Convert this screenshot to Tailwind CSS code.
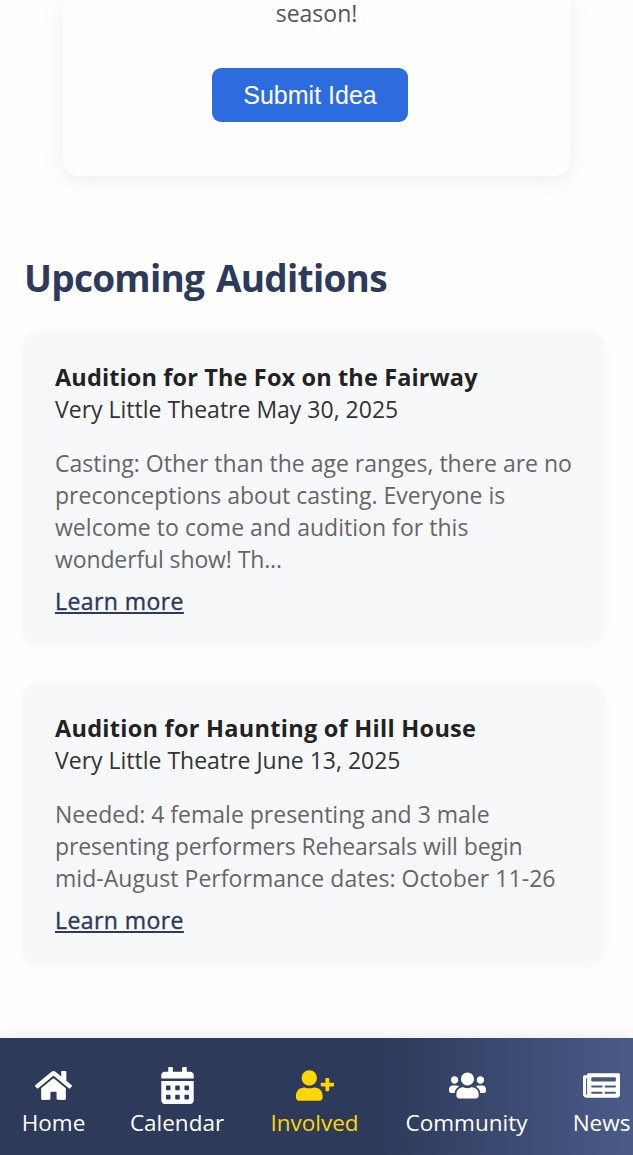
<!DOCTYPE html>
<html lang="en">
<head>
<meta charset="utf-8">
<title>Get Involved</title>
<script src="https://cdn.jsdelivr.net/npm/@tailwindcss/browser@4"></script>
</head>
<body class="bg-[#fefefe] h-[1155px] overflow-hidden flex flex-col font-['Open_Sans','Noto_Sans',sans-serif] text-[23px] leading-8 text-[#333]">
<section class="mx-[63px] h-[176px] shrink-0 w-[507px] rounded-b-2xl bg-[#fefefe] shadow-[0_4px_24px_rgba(0,0,0,0.07)] flex flex-col items-center">
  <p class="h-[29px] leading-[26px] text-[#555]">season!</p>
  <button class="mt-[39px] mr-[13px] w-[196px] h-[54px] rounded-[9px] bg-[#2d6cdf] text-white text-[25px] font-['Liberation_Sans',sans-serif]">Submit Idea</button>
</section>
<main class="pl-[23px] pr-[29px] pt-[77px] flex-1 whitespace-nowrap">
  <h2 class="pl-px h-[50px] leading-[50px] text-[37px] tracking-[-0.75px] [word-spacing:3px] font-bold text-[#2d3a5a]">Upcoming Auditions</h2>
  <article class="mt-[28px] h-[313px] rounded-2xl bg-[#f7f8fa] pl-8 pt-[30px] shadow-[0_2px_8px_rgba(0,0,0,0.04)]">
    <h3 class="font-bold text-[#222] text-[23.5px] tracking-[0.13px]">Audition for The Fox on the Fairway</h3>
    <p>Very Little Theatre May 30, 2025</p>
    <p class="mt-[22px] text-[#666]">Casting: Other than the age ranges, there are no<br>preconceptions about casting. Everyone is<br><span class="tracking-[0.03px]">welcome to come and audition for this</span><br><span class="tracking-[-0.12px]">wonderful show! Th...</span></p>
    <a class="mt-[10px] block tracking-[0.42px] [-webkit-text-stroke:0.4px_#2d3a5a] text-[#2d3a5a] underline decoration-2 underline-offset-2">Learn more</a>
  </article>
  <article class="mt-[38px] h-[282px] rounded-2xl bg-[#f7f8fa] pl-8 pt-[30px] shadow-[0_2px_8px_rgba(0,0,0,0.04)]">
    <h3 class="font-bold text-[#222] text-[23.5px] tracking-[0.27px]">Audition for Haunting of Hill House</h3>
    <p>Very Little Theatre June 13, 2025</p>
    <p class="mt-[22px] text-[#666]">Needed: 4 female presenting and 3 male<br><span class="tracking-[-0.11px]">presenting performers Rehearsals will begin</span><br><span class="tracking-[0.05px]">mid-August Performance dates: October 11-26</span></p>
    <a class="mt-[10px] block tracking-[0.42px] [-webkit-text-stroke:0.4px_#2d3a5a] text-[#2d3a5a] underline decoration-2 underline-offset-2">Learn more</a>
  </article>
</main>
<nav class="h-[117px] shrink-0 pl-[22px] pt-[29px] flex gap-[45px] whitespace-nowrap text-[22.5px] leading-8 text-white bg-linear-to-r from-[#2d3a5a] from-60% to-[#4a5b88] shadow-[0_-2px_16px_rgba(0,0,0,0.08)]">
  <a class="w-[63px] shrink-0 flex flex-col items-center gap-[3px]">
    <svg class="h-[37px] w-[37px] shrink-0" viewBox="0 0 576 512" fill="currentColor"><path d="M280.37 148.26L96 300.11V464a16 16 0 0 0 16 16l112.06-.29a16 16 0 0 0 15.92-16V368a16 16 0 0 1 16-16h64a16 16 0 0 1 16 16v95.64a16 16 0 0 0 16 16.05L464 480a16 16 0 0 0 16-16V300L295.67 148.26a12.19 12.19 0 0 0-15.3 0zM571.6 251.47L488 182.56V44.05a12 12 0 0 0-12-12h-56a12 12 0 0 0-12 12v72.61L318.47 43a48 48 0 0 0-61 0L4.34 251.47a12 12 0 0 0-1.6 16.9l25.5 31A12 12 0 0 0 45.15 301l235.22-193.74a12.19 12.19 0 0 1 15.3 0L530.9 301a12 12 0 0 0 16.9-1.6l25.5-31a12 12 0 0 0-1.7-16.93z"/></svg>
    <span>Home</span>
  </a>
  <a class="w-[94px] shrink-0 flex flex-col items-center gap-[3px]">
    <svg class="h-[37px] w-[33px] shrink-0" viewBox="0 0 448 512" fill="currentColor" fill-rule="evenodd"><path d="M400 64h-48V12c0-6.600-5.400-12-12-12h-40c-6.600 0-12 5.400-12 12v52H160V12c0-6.600-5.400-12-12-12h-40c-6.600 0-12 5.400-12 12v52H48C21.500 64 0 85.500 0 112v48h448v-48c0-26.500-21.500-48-48-48zM0 192h448v272c0 26.500-21.500 48-48 48H48c-26.500 0-48-21.500-48-48zM76 256h40q12 0 12 12v40q0 12-12 12H76q-12 0-12-12v-40q0-12 12-12zm128 0h40q12 0 12 12v40q0 12-12 12h-40q-12 0-12-12v-40q0-12 12-12zm128 0h40q12 0 12 12v40q0 12-12 12h-40q-12 0-12-12v-40q0-12 12-12zM76 384h40q12 0 12 12v40q0 12-12 12H76q-12 0-12-12v-40q0-12 12-12zm128 0h40q12 0 12 12v40q0 12-12 12h-40q-12 0-12-12v-40q0-12 12-12zm128 0h40q12 0 12 12v40q0 12-12 12h-40q-12 0-12-12v-40q0-12 12-12z"/></svg>
    <span>Calendar</span>
  </a>
  <a class="w-[92px] shrink-0 flex flex-col items-center gap-[3px] text-[#ffd600]">
    <svg class="h-[37px] w-[38px] shrink-0" viewBox="0 0 640 512" fill="currentColor"><path d="M624 208h-64v-64c0-8.800-7.200-16-16-16h-32c-8.800 0-16 7.200-16 16v64h-64c-8.800 0-16 7.200-16 16v32c0 8.800 7.200 16 16 16h64v64c0 8.800 7.200 16 16 16h32c8.800 0 16-7.200 16-16v-64h64c8.800 0 16-7.200 16-16v-32c0-8.800-7.200-16-16-16zm-400 48c70.700 0 128-57.300 128-128S294.700 0 224 0 96 57.300 96 128s57.300 128 128 128zm89.600 32h-16.700c-22.200 10.200-46.900 16-72.900 16s-50.600-5.800-72.900-16h-16.700C60.200 288 0 348.200 0 422.400V464c0 26.500 21.500 48 48 48h352c26.500 0 48-21.500 48-48v-41.600c0-74.200-60.200-134.400-134.400-134.400z"/></svg>
    <span class="-ml-px">Involved</span>
  </a>
  <a class="w-[122px] shrink-0 flex flex-col items-center gap-[3px]">
    <svg class="h-[37px] w-[37px] shrink-0" viewBox="0 0 640 512" fill="currentColor"><path d="M96 224c35.300 0 64-28.700 64-64s-28.700-64-64-64-64 28.700-64 64 28.700 64 64 64zm448 0c35.300 0 64-28.700 64-64s-28.700-64-64-64-64 28.700-64 64 28.700 64 64 64zm32 32h-64c-17.600 0-33.500 7.100-45.100 18.600 40.300 22.100 68.900 62 75.100 109.400h66c17.700 0 32-14.300 32-32v-32c0-35.300-28.700-64-64-64zm-256 0c61.900 0 112-50.100 112-112S381.900 32 320 32 208 82.100 208 144s50.100 112 112 112zm76.800 32h-8.300c-20.800 10-43.900 16-68.500 16s-47.600-6-68.500-16h-8.300C179.600 288 128 339.600 128 403.200V432c0 26.500 21.500 48 48 48h288c26.500 0 48-21.500 48-48v-28.800c0-63.600-51.600-115.200-115.200-115.200zm-223.700-13.400C161.500 263.100 145.600 256 128 256H64c-35.300 0-64 28.700-64 64v32c0 17.700 14.300 32 32 32h65.900c6.300-47.400 34.900-87.300 75.200-109.400z"/></svg>
    <span class="-ml-px">Community</span>
  </a>
  <a class="w-[57px] shrink-0 flex flex-col items-center gap-[3px]">
    <svg class="h-[37px] w-[37px] shrink-0" viewBox="0 0 576 512" fill="currentColor" fill-rule="evenodd"><path d="M552 64H88c-13.255 0-24 10.745-24 24v8H24c-13.255 0-24 10.745-24 24v272c0 30.928 25.072 56 56 56h472c26.510 0 48-21.490 48-48V88c0-13.255-10.745-24-24-24zM56 400a8 8 0 0 1-8-8V144h16v248a8 8 0 0 1-8 8zM140 352h152q12 0 12 12v8q0 12-12 12H140q-12 0-12-12v-8q0-12 12-12zm208 0h152q12 0 12 12v8q0 12-12 12H348q-12 0-12-12v-8q0-12 12-12zM140 256h152q12 0 12 12v8q0 12-12 12H140q-12 0-12-12v-8q0-12 12-12zm208 0h152q12 0 12 12v8q0 12-12 12H348q-12 0-12-12v-8q0-12 12-12zM140 128h360q12 0 12 12v40q0 12-12 12H140q-12 0-12-12v-40q0-12 12-12z"/></svg>
    <span>News</span>
  </a>
</nav>
</body>
</html>
